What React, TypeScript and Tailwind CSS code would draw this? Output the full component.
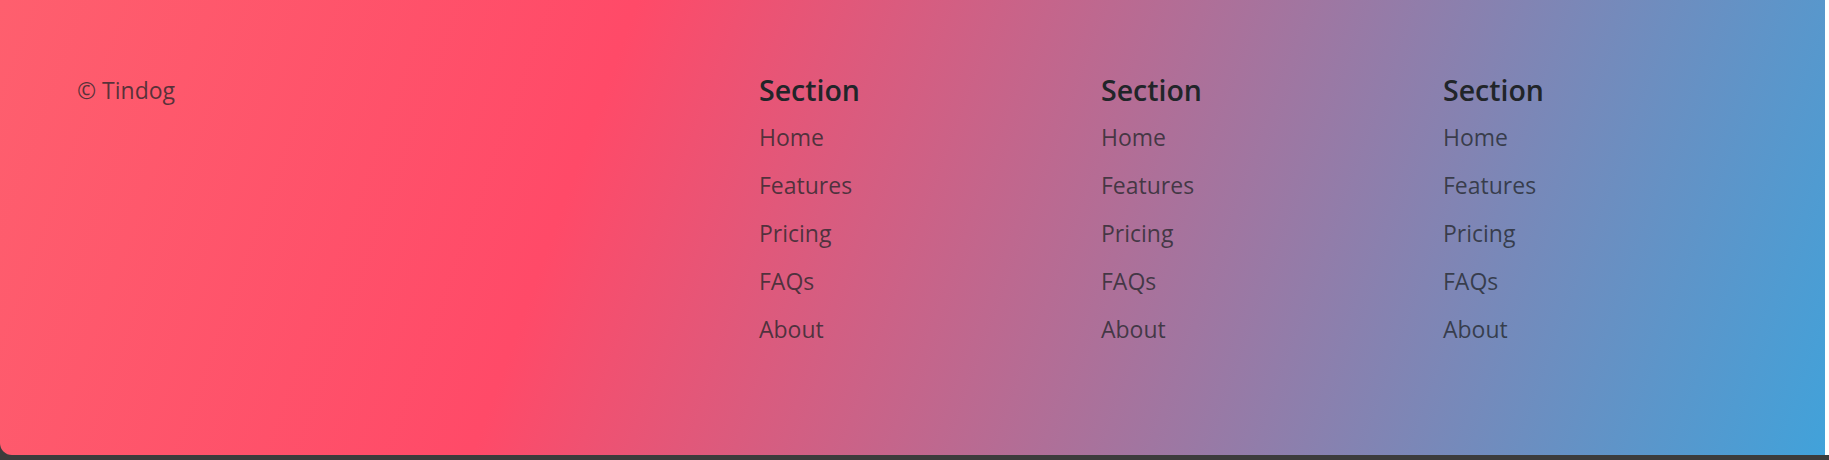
import React from 'react'

const links = ['Home', 'Features', 'Pricing', 'FAQs', 'About']

const Column = () => (
    <div>
        <h5 className="text-[28.5px] leading-[32px] font-semibold text-[#212529] mb-[15px]">Section</h5>
        <ul className="flex flex-col gap-[15.1px]">
            {links.map((l) => (
                <li key={l}>
                    <a href="#" className="text-[23px] leading-[33px] text-[#212529]/75">
                        {l}
                    </a>
                </li>
            ))}
        </ul>
    </div>
)

const App = () => {
    return (
        <div className="w-full h-[460px] bg-[#3c3c3c] font-['Open_Sans',sans-serif]">
            <div className="flex h-[455px]">
                <footer className="w-[1825px] h-full rounded-bl-[12px] bg-[linear-gradient(110deg,#fe5f6e_0%,#ff4a68_32%,#41a2da_100%)] pl-[77px] pt-[74px]">
                    <div className="grid grid-cols-[341px_341px_342px_342px_342px]">
                        <div>
                            <p className="text-[23px] leading-[33px] text-[#212529]/75">© Tindog</p>
                        </div>
                        <div></div>
                        <Column />
                        <Column />
                        <Column />
                    </div>
                </footer>
                <div className="flex-1 bg-white"></div>
            </div>
        </div>
    )
}

export default App
